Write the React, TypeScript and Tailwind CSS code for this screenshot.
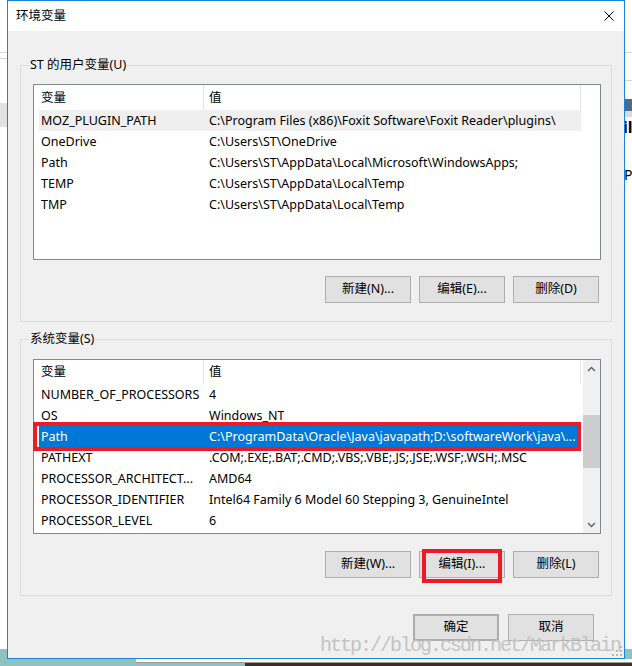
import React from "react";

const UI = "font-['Noto_Sans','Noto_Sans_CJK_SC',sans-serif] text-[12.5px] text-black";

type Row = { name: string; value: string; state?: "inactive" | "active" };

const userRows: Row[] = [
  { name: "MOZ_PLUGIN_PATH", value: "C:\\Program Files (x86)\\Foxit Software\\Foxit Reader\\plugins\\", state: "inactive" },
  { name: "OneDrive", value: "C:\\Users\\ST\\OneDrive" },
  { name: "Path", value: "C:\\Users\\ST\\AppData\\Local\\Microsoft\\WindowsApps;" },
  { name: "TEMP", value: "C:\\Users\\ST\\AppData\\Local\\Temp" },
  { name: "TMP", value: "C:\\Users\\ST\\AppData\\Local\\Temp" },
];

const sysRows: Row[] = [
  { name: "NUMBER_OF_PROCESSORS", value: "4" },
  { name: "OS", value: "Windows_NT" },
  { name: "Path", value: "C:\\ProgramData\\Oracle\\Java\\javapath;D:\\softwareWork\\java\\...", state: "active" },
  { name: "PATHEXT", value: ".COM;.EXE;.BAT;.CMD;.VBS;.VBE;.JS;.JSE;.WSF;.WSH;.MSC" },
  { name: "PROCESSOR_ARCHITECT...", value: "AMD64" },
  { name: "PROCESSOR_IDENTIFIER", value: "Intel64 Family 6 Model 60 Stepping 3, GenuineIntel" },
  { name: "PROCESSOR_LEVEL", value: "6" },
];

function Header({ h }: { h: string }) {
  return (
    <div className={`flex ${h} shrink-0`}>
      <div className="w-[170px] border-r border-[#e5e5e5] pl-[7px] pt-px flex items-center">变量</div>
      <div className="w-[377px] border-r border-[#e5e5e5] pl-[5px] pt-px flex items-center">值</div>
    </div>
  );
}

function RowView({ row }: { row: Row }) {
  const bg =
    row.state === "active"
      ? "bg-[#0078d7] text-white"
      : row.state === "inactive"
      ? "bg-[#efefef]"
      : "";
  return (
    <div className={`flex h-[21px] ml-[5px] w-[542px] pt-[2px] items-center whitespace-nowrap ${bg}`}>
      <div className="w-[165px] pl-[2px] overflow-hidden">{row.name}</div>
      <div className="pl-[5px] overflow-hidden">{row.value}</div>
    </div>
  );
}

function Btn({ label, className = "" }: { label: string; className?: string }) {
  return (
    <div
      className={`w-[86px] h-[27px] flex items-center justify-center bg-[#e1e1e1] border border-[#adadad] ${className}`}
    >
      {label}
    </div>
  );
}

function Chevron({ up }: { up: boolean }) {
  return (
    <svg width="9" height="6" viewBox="0 0 9 6">
      <path d={up ? "M1 5 L4.5 1.5 L8 5" : "M1 1 L4.5 4.5 L8 1"} fill="none" stroke="#606060" strokeWidth="1.4" />
    </svg>
  );
}

export default function App() {
  return (
    <div className={`relative w-[632px] h-[666px] overflow-hidden bg-white ${UI}`}>
      {/* desktop background */}
      <div className="absolute left-0 top-[52px] w-[7px] h-px bg-[#d4d4d4]" />
      <div className="absolute left-0 top-[58px] w-[7px] h-px bg-[#d4d4d4]" />
      <div className="absolute left-0 top-[103px] w-[7px] h-[24px] bg-[#e2e2e2]" />
      <div className="absolute left-[625px] top-0 w-[7px] h-[649px] bg-white flex flex-col">
        <div className="h-[52px]" />
        <div className="h-px bg-[#d4d4d4]" />
        <div className="h-[27px]" />
        <div className="h-px bg-[#d4d4d4]" />
        <div className="h-[18px]" />
        <div className="h-[12px] bg-[#4d6a86]" />
        <div className="h-[6px] bg-[#dadada]" />
        <div className="h-[20px] text-[16px] font-bold leading-[20px] -ml-[2px]">il</div>
        <div className="h-[30px]" />
        <div className="h-[16px] text-[14px] leading-[16px] -ml-[1px]">P</div>
      </div>
      <div className="absolute left-0 top-[649px] w-full h-[17px] bg-[#8ec4c0]" />
      <div className="absolute left-[136px] top-[659px] right-0 h-[4px] bg-white border-b border-[#9a9a9a]" />
      <div className="absolute left-[245px] top-[663px] right-0 h-[3px] bg-[#3a3026]" />

      {/* window */}
      <div className="absolute left-[7px] top-0 w-[618px] h-[659px] border border-[#1883d7] bg-[#f0f0f0] flex flex-col">
        <div className="h-[30px] bg-white flex items-center justify-between pl-[8px] pr-[10px] shrink-0">
          <span>环境变量</span>
          <svg width="10" height="10" viewBox="0 0 10 10">
            <path d="M0.5 0.5 L9.5 9.5 M9.5 0.5 L0.5 9.5" stroke="#000" strokeWidth="1" />
          </svg>
        </div>

        {/* user vars */}
        <fieldset className="mx-[12px] mt-[26px] border border-[#dcdcdc] p-0">
          <legend className="ml-[8px] px-px leading-[16px]">ST 的用户变量(U)</legend>
          <div className="pl-[12px] pr-[10px] pt-[11px] pb-[18px]">
            <div className="h-[176px] border border-[#828790] bg-white flex flex-col">
              <Header h="h-[25px]" />
              {userRows.map((r) => (
                <RowView key={r.name} row={r} />
              ))}
            </div>
            <div className="flex justify-end gap-[8px] mt-[16px] pr-[2px]">
              <Btn label="新建(N)..." />
              <Btn label="编辑(E)..." />
              <Btn label="删除(D)" />
            </div>
          </div>
        </fieldset>

        {/* system vars */}
        <fieldset className="mx-[12px] mt-[9px] border border-[#dcdcdc] p-0">
          <legend className="ml-[8px] px-px leading-[16px]">系统变量(S)</legend>
          <div className="pl-[12px] pr-[10px] pt-[12px] pb-[17px]">
            <div className="relative h-[175px] border border-[#828790] bg-white flex">
              <div className="flex-1 flex flex-col">
                <Header h="h-[24px]" />
                {sysRows.map((r) => (
                  <RowView key={r.name + r.value} row={r} />
                ))}
              </div>
              <div className="w-[17px] bg-[#f0f0f0] flex flex-col items-center">
                <div className="h-[17px] flex items-center justify-center">
                  <Chevron up />
                </div>
                <div className="h-[38px]" />
                <div className="w-full h-[53px] bg-[#cdcdcd]" />
                <div className="flex-1" />
                <div className="h-[17px] flex items-center justify-center">
                  <Chevron up={false} />
                </div>
              </div>
              <div className="absolute left-[-1px] top-[62px] w-[548px] h-[29px] border-4 border-[#ed1c24]" />
            </div>
            <div className="flex justify-end gap-[8px] mt-[17px] pr-[2px]">
              <Btn label="新建(W)..." />
              <div className="relative">
                <Btn label="编辑(I)..." />
                <div className="absolute left-[3px] right-[3px] top-[-2px] bottom-[-5px] border-4 border-[#ed1c24]" />
              </div>
              <Btn label="删除(L)" />
            </div>
          </div>
        </fieldset>

        <div className="flex justify-end gap-[9px] mt-[18px] pr-[30px]">
          <Btn label="确定" className="border-2 border-[#0078d7]" />
          <Btn label="取消" />
        </div>

        <div className="flex-1" />
        <div className="flex justify-end pr-[2px] pb-[2px]">
          <svg width="10" height="10" viewBox="0 0 10 10">
            {[
              [8, 0],
              [8, 4],
              [4, 4],
              [8, 8],
              [4, 8],
              [0, 8],
            ].map(([x, y], i) => (
              <rect key={i} x={x} y={y} width="2" height="2" fill="#b8b8b8" />
            ))}
          </svg>
        </div>
      </div>

      {/* watermark */}
      <div className="absolute left-[320px] top-[634px] font-['Liberation_Mono',monospace] text-[20px] tracking-[-2px] leading-[24px] text-[#c4c4c4] whitespace-nowrap">
        http://blog.csdn.net/MarkBlain
      </div>
    </div>
  );
}
